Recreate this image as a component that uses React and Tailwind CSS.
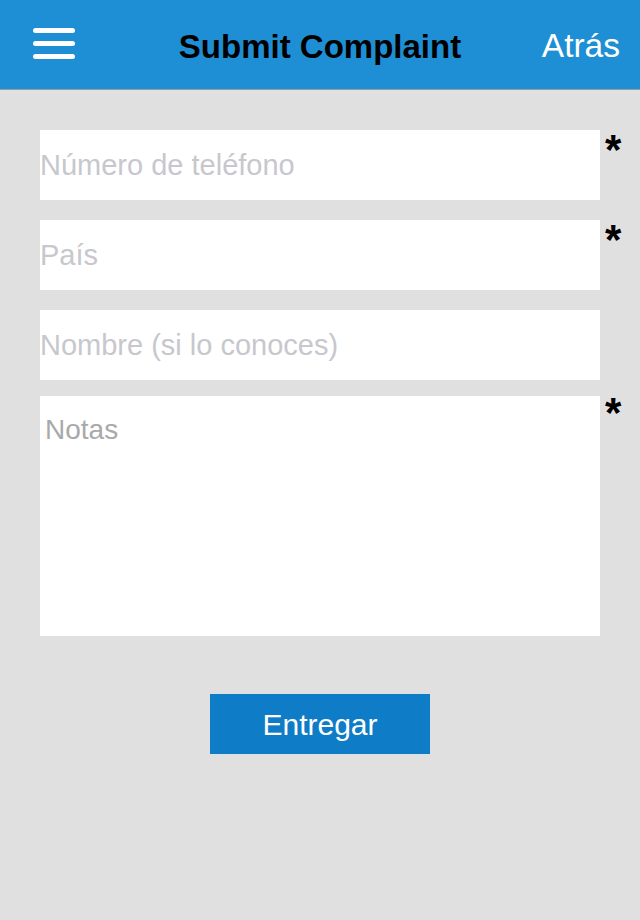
import React from "react";

const fields = [
    { placeholder: "Número de teléfono", required: true },
    { placeholder: "País", required: true },
    { placeholder: "Nombre (si lo conoces)", required: false },
];

export default function App() {
    return (
        <div className="w-[640px] h-[920px] bg-[#e0e0e0] font-['Liberation_Sans',Arial,sans-serif] flex flex-col">
            {/* header */}
            <div className="h-[90px] bg-[#1e8fd5] border-b border-[#9a9a9a] flex items-center justify-between pl-[33px] pr-[20px] relative">
                <svg width="42" height="31" viewBox="0 0 42 31" className="mb-[2px]">
                    <rect x="0" y="0" width="42" height="5" rx="2.5" fill="#fff" />
                    <rect x="0" y="13" width="42" height="5" rx="2.5" fill="#fff" />
                    <rect x="0" y="26" width="42" height="5" rx="2.5" fill="#fff" />
                </svg>
                <div className="absolute left-0 right-0 top-0 h-[90px] pt-[3px] flex items-center justify-center pointer-events-none">
                    <span className="text-[33px] font-bold text-black">Submit Complaint</span>
                </div>
                <span className="text-[33.5px] text-white pt-[3px]">Atrás</span>
            </div>

            {/* form */}
            <div className="flex flex-col pt-[40px] pl-[40px]">
                {fields.map((f) => (
                    <div key={f.placeholder} className="flex mb-[20px]">
                        <input
                            placeholder={f.placeholder}
                            className="w-[560px] h-[70px] bg-white text-[29px] outline-none placeholder:text-[#c7c7cd]"
                        />
                        {f.required && (
                            <span className="text-[42px] font-bold leading-none ml-[5px] -mt-[1px] text-black">*</span>
                        )}
                    </div>
                ))}
                <div className="flex -mt-[4px]">
                    <textarea
                        placeholder="Notas"
                        className="w-[560px] h-[240px] bg-white text-[28px] leading-[32px] px-[5px] pt-[18px] resize-none outline-none placeholder:text-[#a9a9a9]"
                    />
                    <span className="text-[42px] font-bold leading-none ml-[5px] -mt-[4px] text-black">*</span>
                </div>
            </div>

            <div className="flex justify-center mt-[58px]">
                <button className="w-[220px] h-[60px] bg-[#0e7cc6] text-white text-[30px]">Entregar</button>
            </div>
        </div>
    );
}
